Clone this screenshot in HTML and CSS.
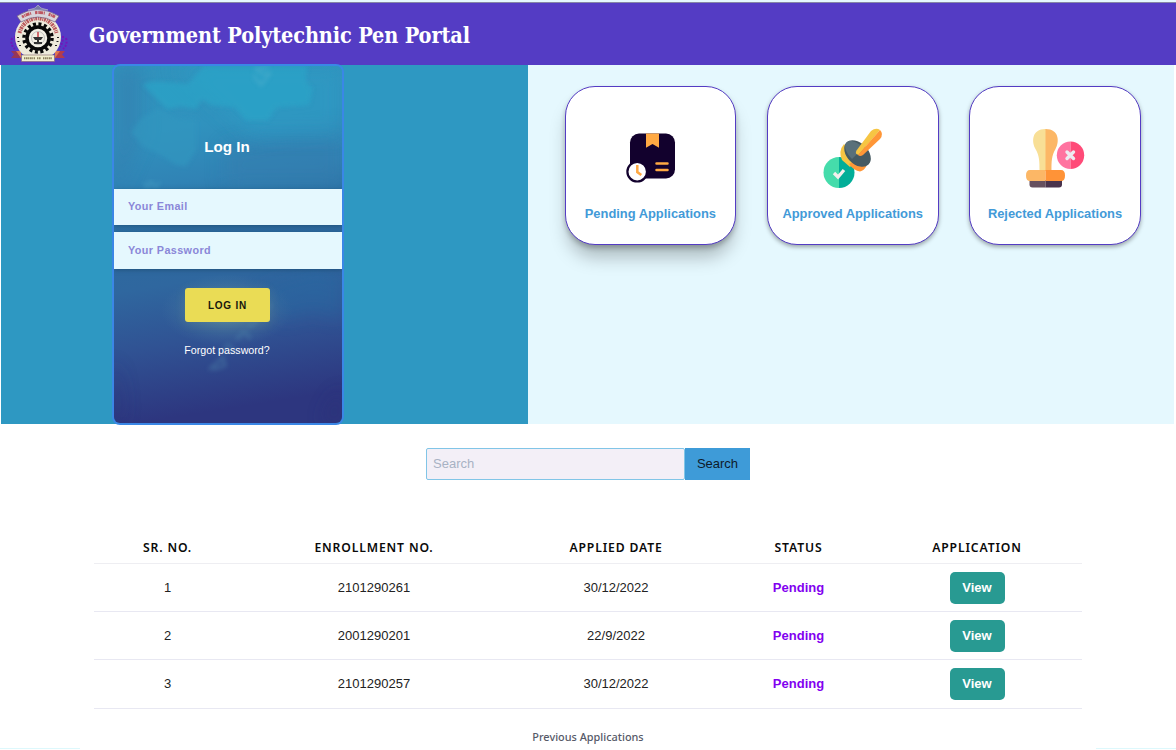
FILE: index.html
```html
<!DOCTYPE html>
<html lang="en">
<head>
<meta charset="utf-8">
<title>Government Polytechnic Pen Portal</title>
<link rel="stylesheet" href="styles.css">
</head>
<body>
<header class="topbar">
  <svg class="crest" width="62" height="60" viewBox="0 0 62 60">
    <path d="M4 34q-2 7 3 11M58 34q2 7-3 11M7 32q0 6 3 11M55 32q0 6-3 11" fill="none" stroke="#7414bb" stroke-width="2" stroke-dasharray="2 1.5"/>
    <path d="M3 47h10v7H3l3-3.500z" fill="#963657"/><path d="M57 47H47v7h10l-3-3.500z" fill="#b33c4d"/>
    <path d="M8 47h5v7z M52 47h-5v7z" fill="#df7551"/>
    <circle cx="30" cy="33" r="23" fill="#eeeadb"/>
    <path d="M11.500 29a19 19 0 0 1 37 0" fill="none" stroke="#ba5659" stroke-width="4" stroke-dasharray="2 .8 1 .7"/>
    <path d="M9 12q20-13 42 0l-4 6q-17-10-34 0z" fill="#d8d5db" stroke="#735a7d" stroke-width=".7"/>
    <path d="M14 13q16-9 33 0" fill="none" stroke="#bd5660" stroke-width="3" stroke-dasharray="2 .6 1 .5 4 .7 1 4"/>
    <path d="M20 6l7-2 3-3 3 3 7 2-10 0z" fill="#777ba7" stroke="#bdbdd0" stroke-width=".6"/>
    <circle cx="30" cy="34" r="14" fill="none" stroke="#080808" stroke-width="3.500" stroke-dasharray="3 2.500"/>
    <circle cx="30" cy="34" r="11" fill="#f2efe5" stroke="#080808" stroke-width="3.500"/>
    <circle cx="30" cy="34" r="6.500" fill="none" stroke="#aaa" stroke-width=".7"/>
    <path d="M30 28v5" stroke="#c73d43" stroke-width="1.500"/><path d="M25 33h10l-2 3h-2v2h3v2h-8v-2h3v-2h-2z" fill="#333"/>
    <path d="M10 33v1M10.500 37v1M12 41v1M50 33v1M49.500 37v1M48 41v1" stroke="#222" stroke-width="2"/>
    <path d="M13.500 51h33v6.500h-33z" fill="#f2efcf" stroke="#85616d" stroke-width=".6"/>
    <path d="M16 54.300h11m2 0h4m2 0h9" stroke="#8d805f" stroke-width="2" stroke-dasharray="1 .6 2 .5"/>
  </svg>
  <h1 class="title">Government Polytechnic Pen Portal</h1>
</header>
<main>
  <section class="hero">
    <div class="login-side">
      <form class="login">
        <svg class="login-art" viewBox="0 0 228 355" preserveAspectRatio="none">
          <defs>
            <linearGradient id="sea" x1="0" y1="0" x2=".1" y2="1">
              <stop offset="0" stop-color="#3193bd"/><stop offset=".2" stop-color="#3092be"/><stop offset=".35" stop-color="#3083b5"/><stop offset=".48" stop-color="#2d6b9f"/><stop offset=".63" stop-color="#2f679f"/><stop offset=".8" stop-color="#305293"/><stop offset="1" stop-color="#2d367f"/>
            </linearGradient>
            <radialGradient id="glow"><stop offset="0" stop-color="#6da4a6" stop-opacity=".7"/><stop offset="1" stop-color="#4b80a5" stop-opacity="0"/></radialGradient>
            <filter id="soft" x="-20%" y="-20%" width="140%" height="140%"><feGaussianBlur stdDeviation="2"/></filter>
            <filter id="wide" x="-40%" y="-40%" width="180%" height="180%"><feGaussianBlur stdDeviation="9"/></filter>
          </defs>
          <path d="M0 0h228v355H0z" fill="url(#sea)"/>
          <path d="M0 0h28v70L6 120H0zM228 60v60H110V80z" fill="#347eaf" opacity=".6" filter="url(#wide)"/>
          <path d="M60 0h168v70l-90 0z" fill="#2e9bc4" opacity=".6" filter="url(#wide)"/>
          <path d="M90 0h104q-6 18 5 22l-4 17-32 2-9 13h-22l-11-13-24-2-9-6-6 10-15-3-14 3-24-24q5-5 24-3l21 2z" fill="#2ca4c8" opacity=".7" filter="url(#soft)"/>
          <path d="M17 66l10-14 18-10 17 10 20 2v30l-10 16-11-2-15-10-17-8z" fill="#3097c0" opacity=".65" filter="url(#soft)"/>
          <path d="M30 116l4 5 3-7 4 7 5-6" fill="none" stroke="#4aa3c5" stroke-width="2" opacity=".6" filter="url(#soft)"/>
          <path d="M139 9l8 10 9-12-8 1-6-5 13-2" fill="none" stroke="#55b3d0" stroke-width="2.500" opacity=".5" filter="url(#soft)"/>
          <path d="M145 220l60-18 23 10v40l-30-8-30 9z" fill="#286ca4" opacity=".45" filter="url(#wide)"/>
          <ellipse cx="113" cy="243" rx="66" ry="36" fill="url(#glow)"/>
          <path d="M0 290q12 35 8 65H0zM228 320q-15 15-20 35h20z" fill="#2a2e76" opacity=".4" filter="url(#wide)"/>
          <path d="M95 302l14-12 2 8-12 4M108 285l6-8 9 8M122 272l8-8 7 7M134 260l9-6M144 252l13-15" fill="none" stroke="#4d83aa" stroke-width="3.500" opacity=".4" filter="url(#soft)"/>
        </svg>
        <h2 class="login-title">Log In</h2>
        <div class="fields">
          <input class="field" type="email" placeholder="Your Email">
          <input class="field" type="password" placeholder="Your Password">
        </div>
        <button class="login-btn" type="button">LOG IN</button>
        <a class="forgot">Forgot password?</a>
      </form>
    </div>
    <div class="cards">
      <a class="card raised">
        <svg class="card-icon" width="64" height="64" viewBox="-.5 0 64 64">
          <rect x="11.500" y="8.500" width="45" height="45" rx="9" fill="#12012d"/>
          <path d="M27.500 8.500h13v14.300L34 19l-6.500 3.800z" fill="#ffa943"/>
          <path d="M38 38.500h11M38 45h11" stroke="#ffa943" stroke-width="2.500" stroke-linecap="round"/>
          <circle cx="18.700" cy="46.700" r="9.800" fill="#fff" stroke="#12012d" stroke-width="2.200"/>
          <path d="M18.800 40v7l4 3" fill="none" stroke="#ffa943" stroke-width="2.500"/>
        </svg>
        <span class="card-label">Pending Applications</span>
      </a>
      <a class="card">
        <svg class="card-icon" width="64" height="64" viewBox="0 0 64 64">
          <path d="M18 32a15.500 15.500 0 0 0 0 31z" fill="#45dcab"/><path d="M18 32a15.500 15.500 0 0 1 0 31z" fill="#02ae98"/>
          <path d="M13 48l4 4 6-7" fill="none" stroke="#f3efed" stroke-width="3.300"/>
          <path d="M23 19q-6 7-2 16l8 7 8-8z" fill="#f6c543"/>
          <path d="M28 39q5 7 11 7.500 4-1 6.500-5.500l-9-7z" fill="#ff9637"/>
          <ellipse cx="36.500" cy="28.500" rx="15.600" ry="10.500" transform="rotate(45 36.500 28.500)" fill="#465a62"/>
          <path d="M31 34C25 28 22 21 25.500 17.500S36 17 42.500 22.500z" fill="#59707a"/>
          <path d="M50 6q5-4 9-1L37.500 30q-4-1-2-4.500z" fill="#f6c543"/><path d="M59 5q4 4 0 9L42 30q-3 2-5 0z" fill="#ff9637"/>
        </svg>
        <span class="card-label">Approved Applications</span>
      </a>
      <a class="card">
        <svg class="card-icon" width="64" height="64" viewBox="-.5 0 64 64">
          <path d="M22 4c-14 0-14 13-10 20 4 7 4 12 4 22h7V4z" fill="#f8df96"/><path d="M22 4c14 0 14 13 10 20-4 7-4 12-4 22h-6z" fill="#fcb766"/>
          <path d="M6 55h16v7.500H9q-3 0-3-3z" fill="#66505f"/><path d="M22 55h16.500v4.500q0 3-3 3H22z" fill="#49334c"/>
          <path d="M22 45H6.500q-4 0-4 5.500t4 5.500H22z" fill="#fcb766"/><path d="M22 45h15.500q4 0 4 5.500t-4 5.500H22z" fill="#ff9337"/>
          <path d="M47 16.500a13.700 13.700 0 0 0 0 27.400z" fill="#ff73a0"/><path d="M47 16.500a13.700 13.700 0 0 1 0 27.400z" fill="#ff4b78"/>
          <path d="M43.500 27l6.500 6.500m0-6.500l-6.500 6.500" stroke="#eeeaf0" stroke-width="3.400" stroke-linecap="round"/>
        </svg>
        <span class="card-label">Rejected Applications</span>
      </a>
    </div>
  </section>
  <form class="search">
    <input class="search-field" type="text" placeholder="Search">
    <button class="search-btn" type="button">Search</button>
  </form>
  <section class="table">
    <div class="row head"><span>SR. NO.</span><span>ENROLLMENT NO.</span><span>APPLIED DATE</span><span>STATUS</span><span>APPLICATION</span></div>
    <div class="row"><span>1</span><span>2101290261</span><span>30/12/2022</span><span class="status">Pending</span><button class="view">View</button></div>
    <div class="row"><span>2</span><span>2001290201</span><span>22/9/2022</span><span class="status">Pending</span><button class="view">View</button></div>
    <div class="row"><span>3</span><span>2101290257</span><span>30/12/2022</span><span class="status">Pending</span><button class="view">View</button></div>
  </section>
  <p class="caption">Previous Applications</p>
</main>
<div class="page-end"><span></span><span></span></div>
</body>
</html>
```
FILE: styles.css
```css
* { box-sizing: border-box; }
body {
  margin: 0;
  height: 750px;
  display: flex;
  flex-direction: column;
  overflow: hidden;
  background: #fff;
  border-top: 2px solid #e5f8fe;
  font-family: "Liberation Sans", Arial, sans-serif;
  font-size: 13px;
}
h1, h2, p { margin: 0; }
button, input { font-family: inherit; border: 0; margin: 0; }
.topbar {
  flex: none;
  height: 63px;
  display: flex;
  align-items: center;
  padding-left: 8px;
  background: #543cc4;
  border-top: 1px solid #8587a6;
}
.crest { flex: none; }
.title {
  margin-left: 19px;
  padding-top: 2px;
  color: #fff;
  font-family: "Roboto Slab", "DejaVu Serif Condensed", "DejaVu Serif", serif;
  font-stretch: condensed;
  font-size: 21.500px;
  font-weight: 700;
  letter-spacing: -.13px;
  white-space: nowrap;
}
main { flex: none; height: 683px; }
.hero { display: flex; height: 358.500px; padding: 0 2px 0 1px; }
.login-side { width: 526.500px; padding-left: 111px; background: #2e98c2; }
.login {
  position: relative;
  top: -1px;
  z-index: 0;
  width: 232px;
  height: 361px;
  display: flex;
  flex-direction: column;
  align-items: center;
  border: 2px solid #3a87e6;
  border-radius: 8px;
  overflow: hidden;
}
.login-art { position: absolute; inset: 0; width: 100%; height: 100%; z-index: -1; }
.login-title { margin-top: 72px; padding-right: 2px; color: #fff; font-size: 15.200px; line-height: 18px; }
.fields { width: 100%; margin-top: 32.500px; display: grid; gap: 7px; }
.field {
  width: 100%;
  height: 36.500px;
  padding: 0 14px 1px;
  background: #e5f8fe;
  font-size: 10.800px;
  font-weight: 700;
  letter-spacing: .4px;
  box-shadow: 0 1px 4px rgba(20, 60, 90, .5);
}
.field::placeholder { color: #8a87d8; opacity: 1; }
.login-btn {
  margin: 19.500px 1px 0 0;
  width: 85px;
  height: 34px;
  padding: 0;
  border-radius: 3px;
  background: #eadc55;
  color: #17170d;
  font-size: 10px;
  font-weight: 700;
  letter-spacing: .8px;
  box-shadow: 0 2px 12px rgba(200, 215, 120, .1);
}
.forgot { margin: 21px 2px 0 0; color: #fff; font-size: 10.700px; line-height: 14px; }
.cards {
  flex: 1;
  display: flex;
  align-items: flex-start;
  gap: 30.500px;
  padding: 20.500px 0 0 37px;
  background: #e5f8fe;
}
.card {
  width: 171.800px;
  height: 159.500px;
  display: flex;
  flex-direction: column;
  align-items: center;
  padding-top: 38px;
  background: #fff;
  border: 1.500px solid #543cc4;
  border-radius: 30px;
  box-shadow: 0 2px 4px rgba(0, 0, 0, .34);
}
.card.raised { box-shadow: 0 3px 5px rgba(0, 0, 0, .24), 0 15px 18px -3px rgba(0, 0, 0, .25); }
.card-icon { flex: none; }
.card-label { margin-top: 17px; color: #429ad8; font-size: 12.900px; font-weight: 700; line-height: 16px; white-space: nowrap; }
.search { display: flex; width: 324px; height: 32px; margin: 24.500px 0 0 426px; }
.search-field {
  width: 259px;
  padding: 0 6px 1px;
  border: 1px solid #81c5e7;
  border-radius: 2px;
  background: #f3eff7;
  font-size: 13px;
}
.search-field::placeholder { color: #a8b2c4; opacity: 1; }
.search-btn { width: 65px; height: 32px; padding: 0 0 1px; background: #3e9bd8; color: #0d1a2a; font-size: 13px; }
.table { width: 988px; margin: 52px 0 0 94px; }
.row {
  display: grid;
  grid-template-columns: 147px 266px 218px 147px 1fr;
  align-items: center;
  justify-items: center;
  height: 48.200px;
  border-bottom: 1px solid #e8e8f2;
  color: #222;
}
.row.head {
  height: 32px;
  border-color: #eeeef2;
  color: #0a0a0a;
  font-family: "Noto Sans", sans-serif;
  font-size: 12.200px;
  font-weight: 600;
  letter-spacing: .85px;
}
.status { color: #8200f0; font-weight: 700; }
.view { width: 55px; height: 32px; padding: 0; border-radius: 5px; background: #289a92; color: #fff; font-size: 13px; font-weight: 700; }
.caption { margin-top: 19px; text-align: center; color: #565968; font-family: "Noto Sans", sans-serif; font-size: 10.900px; font-weight: 500; line-height: 18px; }
.page-end { flex: none; display: flex; justify-content: space-between; height: 1px; }
.page-end span { width: 80px; background: #ddf8fc; }
```
